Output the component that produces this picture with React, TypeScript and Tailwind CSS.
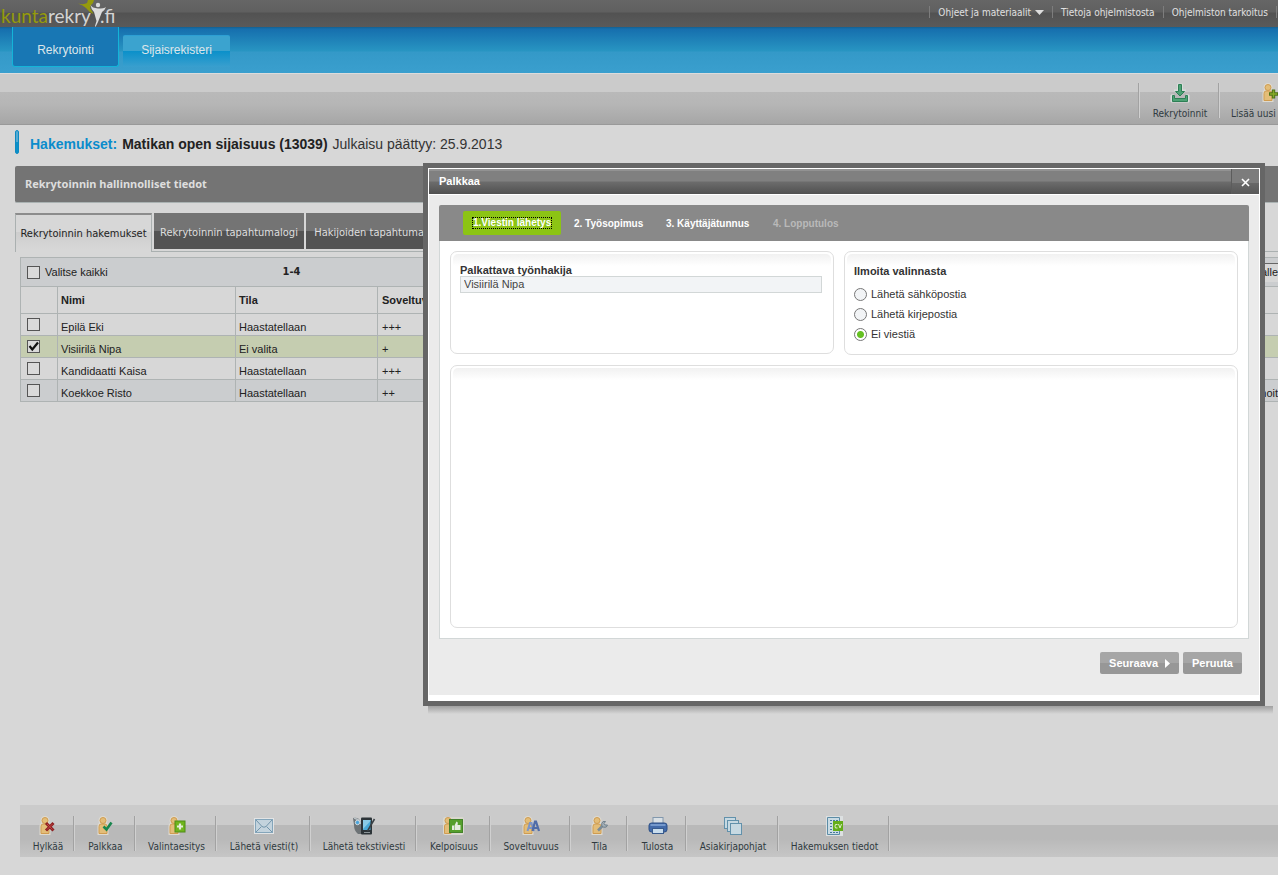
import React from "react";

const UI = "font-['DejaVu_Sans_Condensed','Noto_Sans',sans-serif]";

function Person({ className = "", children }: { className?: string; children?: React.ReactNode }) {
  return (
    <svg className={className} width="20" height="20" viewBox="0 0 20 20" aria-hidden="true">
      <g stroke="#dedad0" strokeWidth="3" fill="#dedad0">
        <circle cx="7" cy="4.500" r="3" />
        <path d="M3 17.500V10.500Q3 8 5 8H9Q11 8 11 10.500V17.500Z" />
      </g>
      <circle cx="7" cy="4.500" r="3" fill="#e3bd78" stroke="#d09c50" />
      <path d="M3 17.500V10.500Q3 8 5 8H9Q11 8 11 10.500V17.500Z" fill="#e3bd78" stroke="#d09c50" />
      {children}
    </svg>
  );
}

const icons: Record<string, React.ReactNode> = {
  reject: (
    <Person>
      <path d="M8 7L15.500 14.500M15.500 7L8 14.500" stroke="#8f2022" strokeWidth="3" />
      <path d="M9 8L14.500 13.500M14.500 8L9 13.500" stroke="#c04444" strokeWidth="1" />
    </Person>
  ),
  hire: (
    <Person>
      <path d="M7.500 10.500L10.500 13.500L15.500 6.500" fill="none" stroke="#19864e" strokeWidth="2.600" />
    </Person>
  ),
  add: (
    <Person>
      <rect x="8" y="5" width="10" height="11" fill="#6fb51d" stroke="#4f8c17" />
      <path d="M13 7.500V13.500M10 10.500H16" stroke="#e4ecd8" strokeWidth="2.200" />
    </Person>
  ),
  mail: (
    <svg width="22" height="20" viewBox="0 0 22 20" aria-hidden="true">
      <rect x="1" y="2" width="20" height="16" fill="#e2e4e5" />
      <rect x="2.500" y="3.500" width="17" height="13" fill="#c3d3dd" stroke="#84a5ba" />
      <path d="M3 4L9 10.500Q11 12 13 10.500L19 4M3 16L8.500 10.500M19 16L13.500 10.500" fill="none" stroke="#7295ab" />
    </svg>
  ),
  sms: (
    <svg width="24" height="20" viewBox="0 0 24 20" aria-hidden="true">
      <path d="M1 2Q4 1 7 3L10 9V18H6Q2 15 2 9Z" fill="#6d7376" />
      <path d="M2 2L7 4L9 8" fill="none" stroke="#b9c1c5" strokeWidth="1.500" />
      <circle cx="5.500" cy="6.500" r="2.200" fill="#4aa5dc" stroke="#d4dde1" />
      <rect x="9" y="1.500" width="11" height="17" rx="1" fill="#2c3438" />
      <rect x="11" y="4" width="7.500" height="10" fill="#4aa9d6" />
      <path d="M11 13L18.500 5V4H11Z" fill="#8acbe6" />
      <path d="M22.500 3L15.500 15" stroke="#3a4145" strokeWidth="1.600" />
      <path d="M12 16.500H18" stroke="#8b9498" />
    </svg>
  ),
  thumb: (
    <svg width="22" height="20" viewBox="0 0 22 20" aria-hidden="true">
      <rect x="0" y="1" width="21" height="18" rx="2" fill="#d9d8cf" />
      <circle cx="5" cy="4.500" r="3" fill="#e3bd78" stroke="#d09c50" />
      <path d="M1.500 17.500V10Q1.500 8 4 8H8V17.500Z" fill="#e3bd78" stroke="#d09c50" />
      <rect x="6.500" y="3.500" width="13" height="13" fill="#559f2c" stroke="#43822a" />
      <path d="M9 9.500H11V14H9ZM11.500 9.500L13.500 5.500Q15.500 6 14.500 9H17.500V14H11.500Z" fill="#e4ecdf" />
    </svg>
  ),
  fit: (
    <Person>
      <path d="M6.500 15L9 7H10.500L13 15M7.500 12H12" fill="none" stroke="#7d95c6" strokeWidth="2" />
      <path d="M11.500 15L14 5.500H15L18 15M12.500 12H17" fill="none" stroke="#506ca8" strokeWidth="2.200" />
    </Person>
  ),
  status: (
    <Person>
      <path d="M8 14.500L13 9.500" stroke="#7b8c98" strokeWidth="2.600" />
      <path d="M15.500 5.500A3 3 0 1 0 17.500 9L15 9L14 7.500Z" fill="#a3afb7" stroke="#71818c" />
    </Person>
  ),
  print: (
    <svg width="22" height="20" viewBox="0 0 22 20" aria-hidden="true">
      <rect x="6" y="1.500" width="10" height="8" fill="#d9e0e5" stroke="#8298ad" />
      <rect x="2" y="7" width="18" height="9" rx="2.500" fill="#426aa9" stroke="#2c4f86" />
      <path d="M3.500 9H18.500" stroke="#82a5d6" strokeWidth="1.600" />
      <rect x="5.500" y="12.500" width="11" height="5" fill="#c8dcec" stroke="#385b8e" />
    </svg>
  ),
  docs: (
    <svg width="20" height="20" viewBox="0 0 20 20" aria-hidden="true">
      <g fill="#c7d9e2" stroke="#6291ab">
        <rect x="1.500" y="1.500" width="11" height="11" />
        <rect x="4.500" y="4.500" width="11" height="11" />
        <rect x="7.500" y="7.500" width="11" height="11" />
      </g>
    </svg>
  ),
  cv: (
    <svg width="20" height="20" viewBox="0 0 20 20" aria-hidden="true">
      <rect x="1" y="0" width="17" height="20" fill="#dce0e1" />
      <path d="M2.500 1.500H14.500V18.500H2.500Z" fill="#c9dbe4" stroke="#5c8ca6" />
      <path d="M5 4.500H13M5 7.500H8M5 10.500H8M5 13.500H8M5 16.500H13" stroke="#46799a" strokeDasharray="2 1" />
      <rect x="8" y="5" width="10" height="10" fill="#63ad1a" />
      <path d="M12.500 8.500H10.500Q9.500 10 10.500 12H12.500M13.500 8L15 12L16.500 8" fill="none" stroke="#dcebc9" />
    </svg>
  ),
  download: (
    <svg width="20" height="20" viewBox="0 0 20 20" aria-hidden="true">
      <path d="M7.500 1H12.500V7H16L10 13L4 7H7.500ZM1 12H4V16H16V12H19V19H1Z" fill="#d9dedb" stroke="#d9dedb" />
      <path d="M8.500 1.500H11.500V8.500H14.500L10 13L5.500 8.500H8.500Z" fill="#4da274" stroke="#2d7f55" />
      <path d="M2.500 12.500H4.500V15.500H15.500V12.500H17.500V18.500H2.500Z" fill="#4da274" stroke="#2d7f55" />
    </svg>
  ),
};

const actions = [
  { label: "Hylkää", icon: "reject", width: "w-[54px]" },
  { label: "Palkkaa", icon: "hire", width: "w-[61px]" },
  { label: "Valintaesitys", icon: "add", width: "w-[81px]" },
  { label: "Lähetä viesti(t)", icon: "mail", width: "w-[94px]" },
  { label: "Lähetä tekstiviesti", icon: "sms", width: "w-[106px]" },
  { label: "Kelpoisuus", icon: "thumb", width: "w-[74px]" },
  { label: "Soveltuvuus", icon: "fit", width: "w-[80px]" },
  { label: "Tila", icon: "status", width: "w-[57px]" },
  { label: "Tulosta", icon: "print", width: "w-[59px]" },
  { label: "Asiakirjapohjat", icon: "docs", width: "w-[92px]" },
  { label: "Hakemuksen tiedot", icon: "cv", width: "w-[111px]" },
];

const applicants = [
  { name: "Epilä Eki", state: "Haastatellaan", fit: "+++", note: "", checked: false, bg: "" },
  { name: "Visiirilä Nipa", state: "Ei valita", fit: "+", note: "", checked: true, bg: "bg-[#c5cdb0]" },
  { name: "Kandidaatti Kaisa", state: "Haastatellaan", fit: "+++", note: "", checked: false, bg: "" },
  { name: "Koekkoe Risto", state: "Haastatellaan", fit: "++", note: "Ilmoit", checked: false, bg: "bg-[#cbcdcf]" },
];

function Check({ label, checked = false }: { label: string; checked?: boolean }) {
  return (
    <span className="relative block h-[13px] w-[13px] shrink-0">
      <input
        type="checkbox"
        aria-label={label}
        defaultChecked={checked}
        className="peer block h-[13px] w-[13px] appearance-none border border-[#555] bg-[#dadada]"
      />
      <svg className="pointer-events-none absolute inset-0 hidden peer-checked:block" width="13" height="13" viewBox="0 0 13 13" aria-hidden="true">
        <path d="M2.500 6L5.300 9.500L11 2.500" fill="none" stroke="#111" strokeWidth="2.200" />
      </svg>
    </span>
  );
}

const toolText = `shrink-0 flex-col gap-1 whitespace-nowrap text-[10px] leading-[14px] text-[#2f3a40] ${UI}`;

function ToolButton({ label, icon, width }: { label: string; icon: string; width: string }) {
  return (
    <button type="button" className={`flex items-center pl-[2px] ${toolText} ${width}`}>
      {icons[icon]}
      {label}
    </button>
  );
}

function Separator() {
  return <span className="box-content h-[35px] w-px shrink-0 self-center border-r border-[#d0d0d0] bg-[#a2a2a2]" />;
}

function Panel({ className = "", children }: { className?: string; children?: React.ReactNode }) {
  return (
    <section className={`rounded-[7px] border border-[#dedede] bg-white p-[2px] ${className}`}>
      <div className="h-full rounded-[5px] bg-linear-to-b from-[#f1f1f1] to-white to-[12px] px-[7px]">{children}</div>
    </section>
  );
}

function Dialog() {
  const options = ["Lähetä sähköpostia", "Lähetä kirjepostia", "Ei viestiä"];
  return (
    <div
      role="dialog"
      aria-label="Palkkaa"
      className="absolute top-[163px] right-[13px] w-[842px] border-[5px] border-[#666] bg-white text-[11px] text-[#333]"
    >
      <div className="absolute -right-[13px] -bottom-[13px] left-0 h-[8px] bg-linear-to-b from-[#a0a0a0] to-[#d7d7d7]" />
      <div className="border border-b-0 border-white">
        <div className="flex h-[25px] items-stretch bg-[linear-gradient(#929292_0_2px,#808080_2px_12px,#6c6c6c_13px,#505050)]">
          <h2 className="flex-1 pl-[10px] leading-[25px] font-bold text-white">Palkkaa</h2>
          <button type="button" aria-label="Sulje" className="flex w-[28px] items-center justify-center border-l border-[#5c5c5c] bg-[linear-gradient(#7c7c7c_0_14px,#686868_14px,#585858)] pt-px">
            <svg width="9" height="9" viewBox="0 0 9 9" aria-hidden="true">
              <path d="M1 1L8 8M8 1L1 8" stroke="#fff" strokeWidth="1.600" />
            </svg>
          </button>
        </div>
      </div>
      <div className="mx-px mt-px mb-[6px] bg-[#ebebeb] px-[10px] pt-[10px] pb-[21px]">
        <nav className="flex h-[36px] items-center rounded-t-[2px] bg-[#898989] pl-[24px] text-[10px] font-bold text-white">
          <button type="button" className="h-[24px] w-[98px] rounded-[2px] bg-[#8cc414] px-[10px]">
            <span className="block leading-[10px] whitespace-nowrap outline-1 outline-dotted outline-black">1.Viestin lähetys</span>
          </button>
          <button type="button" className="ml-[13px] w-[72px] text-left">2. Työsopimus</button>
          <button type="button" className="ml-[20px] w-[86px] text-left">3. Käyttäjätunnus</button>
          <button type="button" disabled className="ml-[21px] text-[#b9b9b9]">4. Lopputulos</button>
        </nav>
        <div className="border border-t-0 border-[#d2d7d7] bg-white px-[10px] pt-[10px] pb-[10px]">
          <div className="flex items-start gap-[10px]">
            <Panel className="h-[103px] w-[384px]">
              <label htmlFor="hired" className="block pt-[10px] leading-[12px] font-bold">Palkattava työnhakija</label>
              <input
                id="hired"
                readOnly
                defaultValue="Visiirilä Nipa"
                className="block h-[17px] w-[362px] border border-[#d2d7d7] bg-[#f2f4f6] px-[3px] pb-[2px] leading-[13px] text-[#444]"
              />
            </Panel>
            <Panel className="h-[104px] flex-1">
              <fieldset>
                <legend className="pt-[10px] leading-[14px] font-bold">Ilmoita valinnasta</legend>
                <div className="pt-[6px]">
                  {options.map((option, i) => (
                    <label key={option} className="flex h-[20px] items-center gap-[4px]">
                      <input
                        type="radio"
                        name="notify"
                        defaultChecked={i === 2}
                        className="h-[13px] w-[13px] appearance-none rounded-full border border-[#777] bg-[#f2f4f6] checked:bg-[radial-gradient(circle,#65c022_0_3px,#fff_4px)]"
                      />
                      {option}
                    </label>
                  ))}
                </div>
              </fieldset>
            </Panel>
          </div>
          <Panel className="mt-[10px] h-[263px]" />
        </div>
        <div className="flex justify-end gap-[4px] pt-[13px] pr-[7px] font-bold text-white">
          <button type="button" className="flex h-[22px] items-center gap-[7px] rounded-[2px] bg-linear-to-b from-[#a6a6a6] from-50% to-[#979797] to-50% px-[9px] leading-[20px]">
            Seuraava
            <svg width="5" height="9" viewBox="0 0 5 9" aria-hidden="true">
              <path d="M0 0L5 4.500L0 9Z" fill="#fff" />
            </svg>
          </button>
          <button type="button" className="h-[22px] rounded-[2px] bg-linear-to-b from-[#a6a6a6] from-50% to-[#979797] to-50% px-[9px] leading-[20px]">Peruuta</button>
        </div>
      </div>
    </div>
  );
}

export default function App() {
  return (
    <div className="relative flex min-h-screen flex-col overflow-hidden bg-[#d7d7d7] font-['Liberation_Sans',Arial,sans-serif] text-[11px] text-[#222]">
      <header className="flex h-[27px] items-stretch justify-between bg-[linear-gradient(#666_0,#606060_12px,#525252_13px,#5a5a5a)]">
        <a href="#" className="relative block w-[120px]" aria-label="kuntarekry.fi">
          <span className="flex pt-[4px] pl-px font-['Lato',sans-serif] text-[19px] leading-[24px] text-[#d4d4d4]">
            <span className="text-[#959a0c]">kunta</span>
            <span className="w-[52px]">rekry</span>
            <span>.fi</span>
          </span>
          <svg className="absolute top-0 left-[78px]" width="29" height="27" viewBox="0 0 29 27" aria-hidden="true">
            <path d="M0 3.500Q6 5 9 3L10 0H16L15 3L13 5L12 8L15.500 14Q11 12 8 8Q5 5 0 3.500Z" fill="#959a0c" />
            <circle cx="20" cy="5" r="2.200" fill="#dcdcdc" />
            <path d="M12.500 5Q14 8 20 8.500Q26 8.500 28 7Q27 10 24 12L20 22L17.500 27L17 26L18.500 21L16 12Q13 9 12.500 5Z" fill="#dcdcdc" />
          </svg>
        </a>
        <nav className={`flex items-center pb-[3px] text-[10px] text-[#e0e0e0] ${UI}`}>
          <a href="#" className="flex h-[12px] items-center gap-[4px] border-l border-[#7d7d7d] px-[8px]">
            Ohjeet ja materiaalit
            <svg width="9" height="5" viewBox="0 0 9 5" aria-hidden="true"><path d="M0 0H9L4.500 5Z" fill="#ddd" /></svg>
          </a>
          <a href="#" className="flex h-[12px] items-center border-l border-[#7d7d7d] px-[8px]">Tietoja ohjelmistosta</a>
          <a href="#" className="mr-px flex h-[12px] items-center border-x border-[#7d7d7d] px-[8px]">Ohjelmiston tarkoitus</a>
        </nav>
      </header>

      <nav className="flex h-[46px] items-start gap-[4px] bg-[linear-gradient(#14608f_0,#166fae_2px,#2895c2_24px,#3499c8_25px,#3a9fce)] pl-[12px] text-[12px] text-[#dde6ea]">
        <a href="#" className="h-[40px] w-[107px] rounded-b-[3px] border border-t-0 border-[#14b4d8] bg-[#1877b4] text-center leading-[46px]">Rekrytointi</a>
        <a href="#" className="mt-[8px] h-[32px] w-[107px] rounded-t-[2px] border-t border-[#2d9fd4] bg-[linear-gradient(#3ba3cf_0_15px,#0a90ca_15px,#3a9fce)] text-center leading-[28px]">Sijaisrekisteri</a>
      </nav>

      <div className="flex h-[52px] justify-end border-t border-b border-t-[#dcdcdc] border-b-[#999] bg-[linear-gradient(#cbcbcb_0_18px,#b9b9b9_18px,#b6b6b6_30px,#a6a6a6)]">
        <div className="flex w-[140px] overflow-hidden pt-[2px]">
          <Separator />
          <div className="flex pt-[7px]"><ToolButton label="Rekrytoinnit" icon="download" width="w-[78px]" /></div>
          <Separator />
          <div className="flex pt-[7px]">
            <button type="button" className={`flex w-[72px] items-start pl-[11px] ${toolText}`}>
              <Person className="ml-[30px]">
                <path d="M12.500 6.500V15.500M8 11H17" stroke="#4d7319" strokeWidth="3.400" />
                <path d="M12.500 7.500V14.500M9 11H16" stroke="#86a929" strokeWidth="1.400" />
              </Person>
              Lisää uusi
            </button>
          </div>
        </div>
      </div>

      <main className="flex-1">
        <h1 className="ml-[15px] flex h-[41px] items-start gap-[5px] pt-[5px] text-[14px] leading-[28px]">
          <span className="mr-[6px] h-[24px] w-[4px] rounded-[2px] border border-[#0c8ac2] bg-linear-to-b from-[#55aad2] from-50% to-[#0c90c8] to-50%" />
          <span className="font-bold text-[#0b8ccc]">Hakemukset:</span>
          <span className="font-bold">Matikan open sijaisuus (13039)</span>
          <span className="text-[#333]">Julkaisu päättyy: 25.9.2013</span>
        </h1>
        <div className="ml-[15px] h-[37px] rounded-l-[2px] border-b border-[#aab2b2] bg-[#747474] pl-[10px]">
          <h2 className="font-['Noto_Sans',sans-serif] text-[11px] leading-[36px] font-bold text-[#dedede]">Rekrytoinnin hallinnolliset tiedot</h2>
        </div>
        <div className={`mt-[10px] ml-[15px] flex h-[39px] items-start text-[11px] leading-[38px] whitespace-nowrap ${UI}`}>
          <button type="button" className="h-[39px] w-[137px] border border-t-2 border-b-0 border-[#aab0b0] border-t-[#8c8c8c] bg-[linear-gradient(#d7d7d7_0_17px,#cdcdcd_17px,#d7d7d7_34px)]">Rekrytoinnin hakemukset</button>
          <div className="flex h-[39px] flex-1 items-start gap-[2px] overflow-hidden border-b border-[#aab0b0] pl-[2px] text-[#dedede]">
            <button type="button" className="h-[36px] w-[150px] shrink-0 bg-[linear-gradient(#747474_0_18px,#535353_18px)] pt-px">Rekrytoinnin tapahtumalogi</button>
            <button type="button" className="h-[36px] w-[144px] shrink-0 bg-[linear-gradient(#747474_0_18px,#535353_18px)] pt-px">Hakijoiden tapahtumalogi</button>
          </div>
        </div>

        <div className="mt-[5px] ml-[20px]">
          <table className="w-full table-fixed border-collapse border-y border-l border-[#aeb3b3] text-left">
            <colgroup>
              <col className="w-[37px]" />
              <col className="w-[178px]" />
              <col className="w-[142px]" />
              <col />
              <col className="w-[37px]" />
            </colgroup>
            <thead>
              <tr className="h-[29px] border-b border-[#aeb3b3] bg-[#cbcdcf]">
                <td colSpan={2} className="pl-[6px]">
                  <label className="flex items-center gap-[5px]"><Check label="Valitse kaikki" />Valitse kaikki</label>
                </td>
                <td className="pl-[47px] font-['DejaVu_Sans_Condensed',sans-serif] text-[11px] font-bold">1-4</td>
                <td />
                <td className="overflow-hidden">
                  <button type="button" className="ml-auto block h-[19px] border-t border-[#666] bg-[#d7d7d7]">Talle</button>
                </td>
              </tr>
              <tr className="h-[27px] border-b border-[#aeb3b3]">
                <th />
                <th className="border-l border-[#aeb3b3] pl-[3px]">Nimi</th>
                <th className="border-l border-[#aeb3b3] pl-[3px]">Tila</th>
                <th className="border-l border-[#aeb3b3] pl-[4px]">Soveltuvuus</th>
                <th />
              </tr>
            </thead>
            <tbody>
              {applicants.map((a) => (
                <tr key={a.name} className={`h-[22px] border-b border-[#aeb3b3] leading-[16px] ${a.bg}`}>
                  <td className="pl-[6px]"><Check label={a.name} checked={a.checked} /></td>
                  <td className="border-l border-[#aeb3b3] pt-[4px] pl-[3px]">{a.name}</td>
                  <td className="border-l border-[#aeb3b3] pt-[4px] pl-[3px]">{a.state}</td>
                  <td className="border-l border-[#aeb3b3] pt-[4px] pl-[4px]">{a.fit}</td>
                  <td className="pt-[4px] text-right">{a.note}</td>
                </tr>
              ))}
            </tbody>
          </table>
        </div>
      </main>

      <footer className="mb-[18px] ml-[20px] flex h-[52px] bg-[linear-gradient(#cbcbcb_0_20px,#b9b9b9_20px,#b9b9b9_34px,#c6c6c6)]">
        {actions.map((a) => (
          <div key={a.label} className="flex pt-[11px]">
            <ToolButton {...a} />
            <span className="-mx-px h-[35px] w-[2px] border-r border-[#d0d0d0] bg-[#a2a2a2]" />
          </div>
        ))}
      </footer>

      <Dialog />
    </div>
  );
}
